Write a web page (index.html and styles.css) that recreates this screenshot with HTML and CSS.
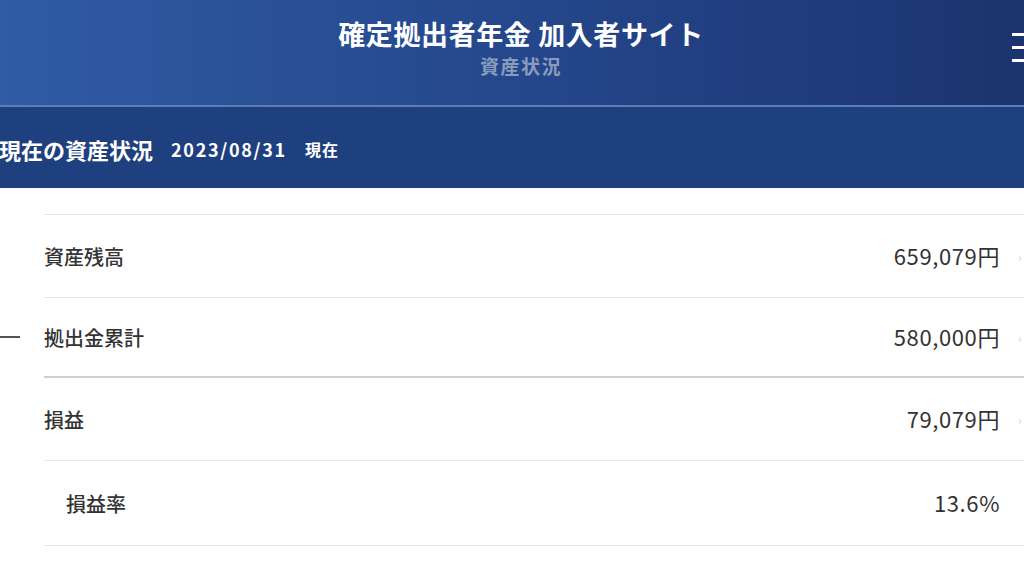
FILE: index.html
```html
<!DOCTYPE html>
<html lang="ja">
<head>
    <meta charset="UTF-8">
    <meta name="viewport" content="width=device-width, initial-scale=1.0">
    <title>資産状況 - 確定拠出者年金 加入者サイト</title>
    <link rel="stylesheet" href="styles.css">
</head>
<body>
<header class="header">
    <div class="header-titles">
        <h1>確定拠出者年金 加入者サイト</h1>
        <p class="header-sub">資産状況</p>
    </div>
    <button type="button" class="menu-btn" aria-label="メニュー">
        <span></span><span></span><span></span>
    </button>
</header>

<section class="status-bar">
    <h2>現在の資産状況</h2>
    <span class="status-date">2023/08/31</span>
    <span class="status-now">現在</span>
</section>

<div class="asset-list">
    <div class="row row-empty">
        <div class="gutter"></div>
        <div class="row-body"></div>
    </div>
    <div class="row">
        <div class="gutter"></div>
        <div class="row-body">
            <span class="label">資産残高</span>
            <span class="value">659,079円</span>
            <span class="more">›</span>
        </div>
    </div>
    <div class="row row-short">
        <div class="gutter"><span class="dash"></span></div>
        <div class="row-body">
            <span class="label">拠出金累計</span>
            <span class="value">580,000円</span>
            <span class="more">›</span>
        </div>
    </div>
    <div class="row row-total">
        <div class="gutter"></div>
        <div class="row-body">
            <span class="label">損益</span>
            <span class="value">79,079円</span>
            <span class="more">›</span>
        </div>
    </div>
    <div class="row row-sub">
        <div class="gutter"></div>
        <div class="row-body">
            <span class="label">損益率</span>
            <span class="value">13.6%</span>
            <span class="more"></span>
        </div>
    </div>
    <div class="row row-end">
        <div class="gutter"></div>
        <div class="row-body"></div>
    </div>
</div>
</body>
</html>
```

FILE: styles.css
```css
* {
    margin: 0;
    padding: 0;
    box-sizing: border-box;
}

body {
    font-family: "Noto Sans CJK JP", "Noto Sans", sans-serif;
    background: #fff;
    color: #333;
    width: 1024px;
    height: 578px;
    overflow: hidden;
}

.header {
    height: 107px;
    background: linear-gradient(90deg, #2f5ca4 0%, #26498f 45%, #1b346f 100%);
    border-bottom: 2px solid #5e7db5;
    display: flex;
    align-items: flex-start;
    padding-left: 30px;
}

.header-titles {
    flex: 1;
    text-align: center;
    padding-top: 15px;
}

.header h1 {
    color: #fff;
    font-size: 27px;
    font-weight: 700;
    line-height: 38px;
    letter-spacing: 0.6px;
}

.header-sub {
    color: #8a9cbd;
    font-size: 19px;
    font-weight: 700;
    line-height: 22px;
    margin-top: 2px;
    letter-spacing: 1.5px;
}

.menu-btn {
    width: 12px;
    margin-top: 33px;
    display: flex;
    flex-direction: column;
    gap: 10px;
    background: none;
    border: none;
    overflow: hidden;
}

.menu-btn span {
    display: block;
    width: 20px;
    height: 3px;
    background: #fff;
}

.status-bar {
    height: 81px;
    background: #1f407e;
    display: flex;
    align-items: center;
    color: #fff;
    margin-left: -1px;
    padding-top: 2px;
}

.status-bar h2 {
    font-size: 22px;
    font-weight: 700;
    margin-right: 18px;
}

.status-date {
    font-size: 18px;
    font-weight: 700;
    letter-spacing: 1.7px;
    margin-right: 18px;
}

.status-now {
    font-size: 16px;
    font-weight: 700;
    letter-spacing: 1px;
}

.row {
    display: flex;
    height: 83px;
}

.row-empty {
    height: 26px;
}

.row-short {
    height: 79px;
}

.row-total {
    height: 84px;
}

.row-sub {
    height: 85px;
}

.row-end {
    height: 33px;
}

.gutter {
    width: 44px;
    flex-shrink: 0;
    display: flex;
    align-items: center;
}

.dash {
    display: block;
    width: 20px;
    height: 2px;
    background: #555;
}

.row-body {
    flex: 1;
    display: flex;
    align-items: center;
    border-top: 1px solid #e6e6e6;
}

.row-empty .row-body {
    border-top: none;
}

.row-total .row-body {
    border-top: 2px solid #cfcfcf;
}

.label {
    flex: 1;
    font-size: 20px;
    font-weight: 500;
    color: #333;
}

.row-sub .label {
    padding-left: 22px;
}

.value {
    font-size: 22px;
    font-weight: 400;
    color: #333;
    letter-spacing: 0.6px;
    margin-top: -3px;
}

.more {
    width: 24px;
    padding-left: 18px;
    color: #d5d5d5;
    font-size: 12px;
}
```
